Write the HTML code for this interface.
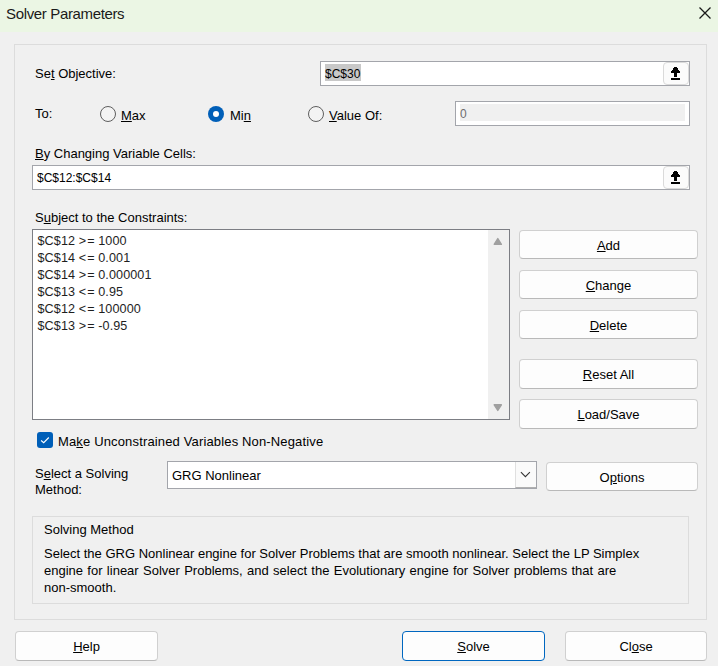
<!DOCTYPE html>
<html><head><meta charset="utf-8">
<style>
html,body{margin:0;padding:0}
body{width:718px;height:666px;overflow:hidden;background:#f0f0f0;position:relative;font-family:"Liberation Sans",sans-serif;font-size:13px;color:#000}
.a{position:absolute}
.t{position:absolute;white-space:nowrap;line-height:15px;font-size:13px}
.s{font-size:12px}
u{text-decoration:underline;text-underline-offset:1px}
.box{position:absolute;box-sizing:border-box;background:#fff;border:1px solid #a3a5ab}
.grp{position:absolute;box-sizing:border-box;border:1px solid #dcdcdc}
.btn{position:absolute;box-sizing:border-box;background:#fdfdfd;border:1px solid #d0d0d0;border-bottom-color:#b9b9b9;border-radius:4px;text-align:center;line-height:27px;font-size:13px;padding-top:1px}
.radio{position:absolute;box-sizing:border-box;width:16px;height:16px;border-radius:50%;border:1px solid #5e5e5e;background:#f3f3f3}
.ref{position:absolute;box-sizing:border-box;background:#fbfbfb;border:1px solid #dadada;border-radius:4px}
</style></head>
<body>
<!-- title bar -->
<div class="a" style="left:0;top:0;width:718px;height:32px;background:#ebf6e4"></div>
<div class="t" style="left:6px;top:5px;font-size:15px;line-height:17px;letter-spacing:-0.35px;color:#1a1a1a">Solver Parameters</div>
<svg class="a" style="left:698px;top:6px" width="14" height="14" viewBox="0 0 14 14"><path d="M1.5 1.5L12.5 12.5M12.5 1.5L1.5 12.5" stroke="#1a1a1a" stroke-width="1.3" fill="none"/></svg>

<!-- outer group -->
<div class="grp" style="left:14px;top:44px;width:693px;height:576px"></div>

<!-- Set objective -->
<div class="t" style="left:35px;top:66px">Se<u>t</u> Objective:</div>
<div class="box" style="left:320px;top:61px;width:370px;height:25px"></div>
<div class="a" style="left:325px;top:64px;width:36px;height:17px;background:#c8c8c8"></div>
<div class="t s" style="left:325px;top:67px">$C$30</div>
<div class="ref" style="left:663px;top:62px;width:26px;height:23px"></div>
<svg class="a" style="left:671px;top:67px" width="9" height="13" viewBox="0 0 9 13" shape-rendering="crispEdges"><path d="M3 0H6V1H7V3H8V4H9V6H6V10H3V6H0V4H1V3H2V1H3Z" fill="#000"/><rect x="0" y="11" width="9" height="2" fill="#000"/></svg>

<!-- To row -->
<div class="t" style="left:35px;top:106px">To:</div>
<div class="radio" style="left:100px;top:106px"></div>
<div class="t" style="left:121px;top:108px"><u>M</u>ax</div>
<div class="radio" style="left:208px;top:106px;border:none;background:#005fb8"></div>
<div class="a" style="left:212.75px;top:110.75px;width:6.5px;height:6.5px;border-radius:50%;background:#fff"></div>
<div class="t" style="left:230px;top:108px">Mi<u>n</u></div>
<div class="radio" style="left:308px;top:106px"></div>
<div class="t" style="left:329px;top:108px"><u>V</u>alue Of:</div>
<div class="box" style="left:455px;top:101px;width:235px;height:25px"></div>
<div class="a" style="left:460px;top:104px;width:225px;height:17px;background:#f0f0f0"></div>
<div class="t s" style="left:460px;top:107px;color:#6d6d6d">0</div>

<!-- By changing -->
<div class="t" style="left:35px;top:146px"><u>B</u>y Changing Variable Cells:</div>
<div class="box" style="left:32px;top:165px;width:658px;height:25px"></div>
<div class="t s" style="left:37px;top:171px">$C$12:$C$14</div>
<div class="ref" style="left:663px;top:166px;width:26px;height:23px"></div>
<svg class="a" style="left:671px;top:171px" width="9" height="13" viewBox="0 0 9 13" shape-rendering="crispEdges"><path d="M3 0H6V1H7V3H8V4H9V6H6V10H3V6H0V4H1V3H2V1H3Z" fill="#000"/><rect x="0" y="11" width="9" height="2" fill="#000"/></svg>

<!-- Constraints -->
<div class="t" style="left:35px;top:210px">S<u>u</u>bject to the Constraints:</div>
<div class="box" style="left:32px;top:229px;width:478px;height:191px;border-color:#7c7e84"></div>
<div class="a" style="left:488px;top:230px;width:21px;height:189px;background:#f0f0f0"></div>
<svg class="a" style="left:492px;top:236px" width="12" height="10" viewBox="0 0 12 10"><path d="M2.2 8.3L5.8 2.6L9.4 8.3Z" fill="#a0a0a0" stroke="#a0a0a0" stroke-width="1.4" stroke-linejoin="round"/></svg>
<svg class="a" style="left:492px;top:402px" width="12" height="10" viewBox="0 0 12 10"><path d="M2.2 2.8L5.8 8.5L9.4 2.8Z" fill="#a0a0a0" stroke="#a0a0a0" stroke-width="1.4" stroke-linejoin="round"/></svg>
<div class="t" style="left:37.5px;top:234px;font-size:12.6px;letter-spacing:0.1px;color:#1e1e1e">$C$12 &gt;<span style="margin-left:1px">=</span> 1000</div>
<div class="t" style="left:37.5px;top:251px;font-size:12.6px;letter-spacing:0.1px;color:#1e1e1e">$C$14 &lt;<span style="margin-left:1px">=</span> 0.001</div>
<div class="t" style="left:37.5px;top:268px;font-size:12.6px;letter-spacing:0.1px;color:#1e1e1e">$C$14 &gt;<span style="margin-left:1px">=</span> 0.000001</div>
<div class="t" style="left:37.5px;top:285px;font-size:12.6px;letter-spacing:0.1px;color:#1e1e1e">$C$13 &lt;<span style="margin-left:1px">=</span> 0.95</div>
<div class="t" style="left:37.5px;top:302px;font-size:12.6px;letter-spacing:0.1px;color:#1e1e1e">$C$12 &lt;<span style="margin-left:1px">=</span> 100000</div>
<div class="t" style="left:37.5px;top:319px;font-size:12.6px;letter-spacing:0.1px;color:#1e1e1e">$C$13 &gt;<span style="margin-left:1px">=</span> -0.95</div>

<div class="btn" style="left:519px;top:230px;width:179px;height:29px"><u>A</u>dd</div>
<div class="btn" style="left:519px;top:270px;width:179px;height:29px"><u>C</u>hange</div>
<div class="btn" style="left:519px;top:310px;width:179px;height:29px"><u>D</u>elete</div>
<div class="btn" style="left:519px;top:359px;width:179px;height:30px"><u>R</u>eset All</div>
<div class="btn" style="left:519px;top:399px;width:179px;height:30px"><u>L</u>oad/Save</div>

<!-- checkbox -->
<div class="a" style="left:37px;top:432px;width:16px;height:16px;border-radius:3px;background:#005fb8"></div>
<svg class="a" style="left:37px;top:432px" width="16" height="16" viewBox="0 0 16 16"><path d="M4.1 8.5L6.7 10.7L11.8 5.5" stroke="#fff" stroke-width="1.1" fill="none"/></svg>
<div class="t" style="left:58px;top:434px;letter-spacing:0.15px">Ma<u>k</u>e Unconstrained Variables Non-Negative</div>

<!-- solving method -->
<div class="t" style="left:35px;top:466px">S<u>e</u>lect a Solving</div>
<div class="t" style="left:35px;top:482px">Method:</div>
<div class="box" style="left:167px;top:461px;width:370px;height:28px"></div>
<div class="t" style="left:172px;top:468px">GRG Nonlinear</div>
<div class="a" style="left:515px;top:462px;width:21px;height:26px;box-sizing:border-box;background:#fafafa;border-left:1px solid #e0e0e0;border-bottom:1px solid #b0b0b0"></div>
<svg class="a" style="left:519px;top:470px" width="12" height="8" viewBox="0 0 12 8"><path d="M1.9 2.1L6.4 6.7L10.9 2.1" stroke="#333" stroke-width="1.05" fill="none"/></svg>
<div class="btn" style="left:546px;top:462px;width:152px;height:29px">O<u>p</u>tions</div>

<!-- description group -->
<div class="grp" style="left:32px;top:516px;width:657px;height:88px"></div>
<div class="t" style="left:44px;top:522px">Solving Method</div>
<div class="t" style="left:44px;top:546px">Select the GRG Nonlinear engine for Solver Problems that are smooth nonlinear. Select the LP Simplex</div>
<div class="t" style="left:44px;top:563px;word-spacing:0.72px">engine for linear Solver Problems, and select the Evolutionary engine for Solver problems that are</div>
<div class="t" style="left:44px;top:580px">non-smooth.</div>

<!-- bottom buttons -->
<div class="btn" style="left:15px;top:631px;width:143px;height:30px"><u>H</u>elp</div>
<div class="btn" style="left:402px;top:631px;width:143px;height:30px;border:1px solid #0067c0"><u>S</u>olve</div>
<div class="btn" style="left:565px;top:631px;width:142px;height:30px">Cl<u>o</u>se</div>
</body></html>
